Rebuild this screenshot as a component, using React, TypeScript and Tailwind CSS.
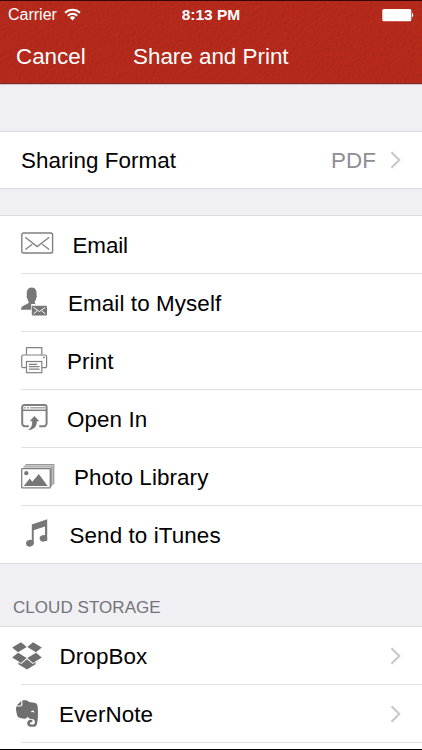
import type { ReactNode } from "react";

const GRAY = "#808080";

function EmailIcon() {
  return (
    <svg className="shrink-0" width="33" height="23" viewBox="0 0 33 23" fill="none" stroke={GRAY} strokeWidth="1.4">
      <rect x="0.8" y="1" width="30.8" height="20" rx="1.8" />
      <path d="M4.300 5.200 16.200 14.600 28.200 5.200M4.300 17.400l7-5.200M28.200 17.400l-7-5.200" strokeWidth="1.300" />
    </svg>
  );
}

function MyselfIcon() {
  return (
    <svg width="27" height="30" viewBox="0 0 27 30" fill="#777">
      <path d="M0 22.700c.1-2 .6-3.200 2.300-4l4.200-2c1-.5 1.300-1 1.200-2-.7-1-1.200-2-1.400-3.500-.8-.5-.9-2.300-.4-3C5.300 3.700 6.900.5 10.700.5s5.400 3.200 4.800 7.700c.5.700.4 2.500-.4 3-.2 1.500-.7 2.500-1.400 3.500 0 1.200.2 1.700.9 2.300h-4.400v5.700z" />
      <rect x="10.800" y="18.700" width="15.200" height="9.800" rx="0.900" />
      <path d="M12.500 20.400l5.900 4.200 5.900-4.200M12.500 26.900l3.600-3M24.300 26.900l-3.600-3" fill="none" stroke="#fff" strokeWidth="1" />
    </svg>
  );
}

function PrintIcon() {
  return (
    <svg width="27" height="28" viewBox="0 0 27 28" fill="none" stroke={GRAY} strokeWidth="1.2">
      <path d="M5.500 8.800V1.600h15.300v7.200" />
      <path d="M5.300 21.700H2.200a1.500 1.500 0 0 1-1.500-1.500v-9.600A1.700 1.700 0 0 1 2.400 9h21.500a1.700 1.700 0 0 1 1.700 1.600v9.600a1.500 1.500 0 0 1-1.500 1.500h-3.200" />
      <rect x="5.500" y="15.500" width="15.300" height="11.200" />
      <path d="M8 18.300h8M8 20.700h10.500M8 23.200h10.500" />
      <path d="M22 11.500h1.800" strokeWidth="1.600" />
    </svg>
  );
}

function OpenInIcon() {
  return (
    <svg width="27" height="28" viewBox="0 0 27 28" fill="none" stroke={GRAY}>
      <path d="M7.800 22.300H4.200A3 3 0 0 1 1.200 19.300V3a2 2 0 0 1 2-2h20.400a2 2 0 0 1 2 2v16.300a3 3 0 0 1-3 3h-4.400" strokeWidth="2" />
      <path d="M1.200 6.300h24.400" strokeWidth="1.500" />
      <path d="M2.800 3.700h2M6 3.700h2M9.200 3.700h15" strokeWidth="1.600" stroke="#aaa" />
      <path d="M13.400 12 18.300 17.200h-2.500c.2 5-2.800 8.600-8.700 8.900 2.900-1.900 4.200-4.300 4.200-8.900H8.700z" fill="#777" stroke="none" />
    </svg>
  );
}

function PhotoIcon() {
  return (
    <svg className="shrink-0" width="34" height="25" viewBox="0 0 34 25" fill="none" stroke={GRAY}>
      <path d="M4.500.700H32.700V19.500H31M2.500 2.900h28v19h-1.500" stroke="#999" strokeWidth="1.300" />
      <path d="M3.500 1.800h28.100v19" stroke="#bbb" strokeWidth="1" />
      <rect x="0.700" y="4.600" width="28.600" height="19.200" rx="0.600" fill="#fff" strokeWidth="1.300" />
      <circle cx="5.300" cy="9.200" r="2.100" fill="#777" stroke="none" />
      <path d="M2.800 22 8.700 14.600l2.600 3.100 6.500-7.700 8.800 12z" fill="#777" stroke="none" />
    </svg>
  );
}

function MusicIcon() {
  return (
    <svg width="22" height="29" viewBox="0 0 22 29" fill="#777">
      <path d="M5.800 5.500 21.200.3V22H19V7.500L7.700 11.300v13.600H5.800z" />
      <ellipse cx="3.900" cy="24.200" rx="3.900" ry="3.300" transform="rotate(-15 3.900 24.200)" />
      <ellipse cx="17.400" cy="19.300" rx="3.800" ry="3.200" transform="rotate(-15 17.400 19.300)" />
    </svg>
  );
}

// Open box: four flaps around the lid and the bottom fold
function DropboxIcon() {
  return (
    <svg width="30" height="28" viewBox="0 0 30 28" fill="#6f6f6f">
      <path d="M9 .2 14.700 5 6 10.200.2 5.500z" />
      <path d="M21 .2 29.800 5.500 24 10.200 15.300 5z" />
      <path d="M6 10.800 14.700 16.100 9 20.900.2 15.500z" />
      <path d="M24 10.800 29.800 15.500 21 20.900 15.300 16.100z" />
      <path d="M15 17.300l5.800 4.800 2.800-1.800v2L15 27.600 6.400 22.300v-2l2.800 1.800z" />
    </svg>
  );
}

function EvernoteIcon() {
  return (
    <svg width="22" height="27" viewBox="0 0 22 27" fill="#6f6f6f">
      <path d="M5.300.900v3.200c0 .9-.5 1.400-1.400 1.400H.600z" />
      <path
        fillRule="evenodd"
        d="M6.200.6C8 .1 11.500.1 12.900 1.900c2.600.200 5.300.6 7 1.300 1 .5 1.500 1.500 1.700 3.200.6 4.500.5 12-.5 17-.5 2.500-1.600 3.300-3.800 3.300h-2.100c-2.500 0-4-1.400-4-3.500 0-2.200 1.500-3.500 3.600-3.500h1.500v2.600h-.9c-.9 0-1.400.4-1.400 1.100s.6 1.200 1.500 1.200h1.200c1.400 0 2.200-.8 2.200-2.300 0-1.900-.8-2.900-2.900-3.200-2.500-.3-3.900-1-4.500-2.600-.5 1.500-1.400 2.300-3 2.200-2.500-.2-4.500-.7-6-1.500C.9 16.400.1 10.500 0 8.200c0-1 .3-1.600.9-1.600H4c1.600 0 2.500-.8 2.500-2.500zM15 12.400c1-.6 2.200-.5 3.300.300 0-1.400-.5-2.200-1.500-2.200S15.200 11.200 15 12.400z"
      />
    </svg>
  );
}

function Chevron() {
  return (
    <svg width="12" height="18" viewBox="0 0 12 18" fill="none" stroke="#c7c7cc" strokeWidth="2">
      <path d="M1.500 1.200 9.300 9l-7.800 7.800" />
    </svg>
  );
}

interface RowProps {
  icon: ReactNode;
  label: string;
  iconClass: string;
  labelClass: string;
  arrow?: boolean;
  last?: boolean;
}

function Row({ icon, label, iconClass, labelClass, arrow, last }: RowProps) {
  return (
    <li className={`relative flex items-center bg-white ${last ? "h-[57px]" : "h-[58px]"}`}>
      <span className={`flex shrink-0 ${iconClass}`}>{icon}</span>
      <span className={`grow whitespace-nowrap ${last ? "pt-[3px]" : "pt-px"} ${labelClass}`}>{label}</span>
      {arrow && (
        <span className="mr-[20px] pb-px">
          <Chevron />
        </span>
      )}
      {!last && <span className="absolute right-0 bottom-0 left-[21px] h-px bg-[#e2e2e5]" />}
    </li>
  );
}

const ACTIONS: RowProps[] = [
  { icon: <EmailIcon />, label: "Email", iconClass: "w-[54px] pl-[21px] pb-[3px]", labelClass: "pl-[18.500px] tracking-[-0.1px]" },
  { icon: <MyselfIcon />, label: "Email to Myself", iconClass: "w-[54px] pl-[21px] pb-[3px]", labelClass: "pl-[14px]" },
  { icon: <PrintIcon />, label: "Print", iconClass: "w-[54px] pl-[21px] pb-[2px]", labelClass: "pl-[13px]" },
  { icon: <OpenInIcon />, label: "Open In", iconClass: "w-[54px] pl-[21px] pb-[3px]", labelClass: "pl-[13px]" },
  { icon: <PhotoIcon />, label: "Photo Library", iconClass: "w-[54px] pl-[21px] pb-[2px]", labelClass: "pl-[20px]" },
  { icon: <MusicIcon />, label: "Send to iTunes", iconClass: "w-[54px] pl-[26px] pb-[2px]", labelClass: "pl-[15.500px]" },
];

const CLOUD: RowProps[] = [
  { icon: <DropboxIcon />, label: "DropBox", iconClass: "w-[42px] pl-[12px]", labelClass: "pl-[17.500px]" },
  { icon: <EvernoteIcon />, label: "EverNote", iconClass: "w-[42px] pl-[16px] pb-px", labelClass: "pl-[17px]" },
];

function Header() {
  return (
    <header className="relative h-[85px] shrink-0 border-b border-[#d3c3c8]">
      <div className="relative h-[84px] overflow-hidden border-t border-b border-t-[#350705] border-b-[#7b2a24] bg-[#b42a1c] text-white">
        {/* Leather grain */}
        <svg className="absolute inset-0 h-full w-full opacity-15" aria-hidden="true">
          <filter id="grain" colorInterpolationFilters="sRGB">
            <feTurbulence type="fractalNoise" baseFrequency="0.35" numOctaves="2" seed="4" />
            <feDiffuseLighting lightingColor="#ff3c28" surfaceScale="0.8">
              <feDistantLight azimuth="225" elevation="45" />
            </feDiffuseLighting>
          </filter>
          <rect width="100%" height="100%" filter="url(#grain)" />
        </svg>

        <div className="relative grid h-7 grid-cols-3 items-center px-2 text-[16px]">
          <div className="flex items-center gap-[7px]">
            <span>Carrier</span>
            <svg className="mb-[2px]" width="17" height="13" viewBox="0 0 17 13" fill="none" stroke="#fff" strokeWidth="2">
              <path d="M1 4.800a10.700 10.700 0 0 1 15 0M3.800 7.700a6.800 6.800 0 0 1 9.400 0" />
              <path d="M8.500 12.400 5.700 9.600a4 4 0 0 1 5.600 0z" fill="#fff" stroke="none" />
            </svg>
          </div>
          <span className="text-center text-[15.500px] font-bold">8:13 PM</span>
          <svg className="mb-px justify-self-end" width="34" height="14" viewBox="0 0 34 14" fill="#fff">
            <rect x="2.300" y="0.900" width="29" height="12.300" rx="1.500" />
            <path d="M32 5c1.600.4 1.600 4 0 4.400z" />
          </svg>
        </div>

        <div className="relative flex h-14 items-center">
          <button className="w-[133px] pl-4 text-left">Cancel</button>
          <h1>Share and Print</h1>
        </div>
      </div>
    </header>
  );
}

export default function App() {
  return (
    <main className="flex h-[750px] w-full flex-col overflow-hidden border-b border-black bg-[#efeff4] font-['Liberation_Sans',Arial,sans-serif] text-[22.400px] text-black">
      <Header />

      <section className="mt-[46px] flex h-[58px] shrink-0 items-center border-y border-[#dcdce1] bg-white pl-[21px] tracking-[0.050px]">
        <span className="grow pt-[2px]">Sharing Format</span>
        <span className="mr-[14px] pt-[2px] text-[#8e8e93]">PDF</span>
        <span className="mr-[20px]">
          <Chevron />
        </span>
      </section>

      <ul className="mt-[26px] shrink-0 border-y border-[#dcdce1] tracking-[0.100px]">
        {ACTIONS.map((item, i) => (
          <Row key={item.label} {...item} last={i === ACTIONS.length - 1} />
        ))}
      </ul>

      <h2 className="flex h-[62px] shrink-0 items-end pb-[6px] pl-[13px] text-[17px] tracking-[0.050px] text-[#737378]">
        CLOUD STORAGE
      </h2>

      <ul className="grow border-t border-[#d9d9de] bg-white tracking-[0.100px]">
        {CLOUD.map((item) => (
          <Row key={item.label} {...item} arrow />
        ))}
      </ul>
    </main>
  );
}
